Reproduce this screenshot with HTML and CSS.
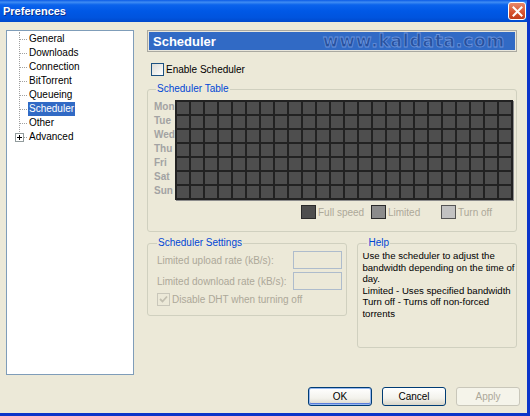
FILE: index.html
```html
<!DOCTYPE html>
<html lang="en">
  <head>
    <meta charset="UTF-8" />
    <title>Preferences</title>
    <link rel="stylesheet" href="styles.css">
  </head>
  <body>
    <div class="window">
      <div class="titlebar">
        <span class="title">Preferences</span>
        <button class="close-btn" title="Close">
          <svg width="11" height="11" viewBox="0 0 11 11">
            <path d="M1.5 1.5 L9.5 9.5 M9.5 1.5 L1.5 9.5" stroke="#fff" stroke-width="2" stroke-linecap="square" />
          </svg>
        </button>
      </div>

      <div class="client">
        <div class="main">
          <div class="tree">
            <ul class="tree-list">
              <li>General</li>
              <li>Downloads</li>
              <li>Connection</li>
              <li>BitTorrent</li>
              <li>Queueing</li>
              <li><span class="selected">Scheduler</span></li>
              <li>Other</li>
              <li class="has-children">
                <svg class="expander" width="9" height="9" viewBox="0 0 9 9">
                  <rect x="0.5" y="0.5" width="8" height="8" fill="#fff" stroke="#919b9c" />
                  <path d="M2 4.5 H7 M4.5 2 V7" stroke="#000" />
                </svg>
                Advanced
              </li>
            </ul>
          </div>

          <div class="panel">
            <div class="panel-header">
              <span class="panel-title">Scheduler</span>
              <span class="watermark">www.kaldata.com</span>
            </div>

            <label class="check-row">
              <span class="checkbox"></span>
              Enable Scheduler
            </label>

            <fieldset class="group table-group">
              <legend>Scheduler Table</legend>
              <div class="table-wrap">
                <div class="days">
                  <span>Mon</span>
                  <span>Tue</span>
                  <span>Wed</span>
                  <span>Thu</span>
                  <span>Fri</span>
                  <span>Sat</span>
                  <span>Sun</span>
                </div>
                <div class="hours-grid"></div>
              </div>
              <div class="legend-row">
                <span class="legend-item"><span class="swatch full"></span>Full speed</span>
                <span class="legend-item"><span class="swatch limited"></span>Limited</span>
                <span class="legend-item"><span class="swatch off"></span>Turn off</span>
              </div>
            </fieldset>

            <div class="lower">
              <fieldset class="group settings-group">
                <legend>Scheduler Settings</legend>
                <div class="field-row">
                  <span>Limited upload rate (kB/s):</span>
                  <input type="text" disabled />
                </div>
                <div class="field-row">
                  <span>Limited download rate (kB/s):</span>
                  <input type="text" disabled />
                </div>
                <label class="check-row disabled">
                  <span class="checkbox checked">
                    <svg width="9" height="9" viewBox="0 0 9 9">
                      <path d="M1 4 L3.5 6.5 L8 1.5" fill="none" stroke="#c2bfb0" stroke-width="1.8" />
                    </svg>
                  </span>
                  Disable DHT when turning off
                </label>
              </fieldset>

              <fieldset class="group help-group">
                <legend>Help</legend>
                <p>
                  Use the scheduler to adjust the bandwidth depending on the time of day.<br />
                  Limited - Uses specified bandwidth<br />
                  Turn off - Turns off non-forced torrents
                </p>
              </fieldset>
            </div>
          </div>
        </div>

        <div class="buttons">
          <button class="btn default">OK</button>
          <button class="btn">Cancel</button>
          <button class="btn" disabled>Apply</button>
        </div>
      </div>
    </div>
  </body>
</html>
```

FILE: styles.css
```css
body {
  margin: 0;
  font-family: "Liberation Sans", Arial, sans-serif;
  font-size: 10px;
  background: #ece9d8;
}
.window {
  width: 527px;
  height: 413px;
  display: flex;
  flex-direction: column;
  border-right: 3px solid #0b35c9;
  border-bottom: 3px solid #0b35c9;
  background: #ece9d8;
}

/* title bar */
.titlebar {
  height: 22px;
  flex: none;
  display: flex;
  align-items: center;
  justify-content: space-between;
  padding: 0 1px 0 3px;
  background: linear-gradient(
    to bottom,
    #0a5ae6 0%,
    #3f8cf3 10%,
    #0b63ec 22%,
    #0058e6 50%,
    #0054de 80%,
    #0049cc 100%
  );
}
.title {
  color: #fff;
  font-size: 11px;
  font-weight: bold;
  text-shadow: 1px 1px #0c2f8a;
}
.close-btn {
  width: 18px;
  height: 18px;
  padding: 0;
  display: flex;
  align-items: center;
  justify-content: center;
  border: 1px solid #fff;
  border-radius: 3px;
  background: linear-gradient(to bottom, #e9896b, #d6532f 60%, #c13d1b);
}

/* client area */
.client {
  flex: 1;
  display: flex;
  flex-direction: column;
  padding: 8px 7px 0 6px;
}
.main {
  display: flex;
  gap: 13px;
}

/* category tree */
.tree {
  width: 126px;
  height: 343px;
  background: #fff;
  border: 1px solid #7f9db9;
}
.tree-list {
  position: relative;
  list-style: none;
  margin: 1px 0 0;
  padding: 0;
}
.tree-list::before {
  content: "";
  position: absolute;
  left: 12px;
  top: 0;
  height: 102px;
  border-left: 1px dotted #a0a0a0;
}
.tree-list li {
  position: relative;
  height: 14px;
  line-height: 14px;
  padding-left: 22px;
  color: #000;
}
.tree-list li::before {
  content: "";
  position: absolute;
  left: 13px;
  top: 7px;
  width: 7px;
  border-top: 1px dotted #a0a0a0;
}
.tree-list .selected {
  display: inline-block;
  margin-left: -1px;
  padding: 0 1px;
  background: #316ac5;
  color: #fff;
}
.tree-list .expander {
  position: absolute;
  left: 8px;
  top: 3px;
  z-index: 1;
}

/* right panel */
.panel {
  width: 370px;
  display: flex;
  flex-direction: column;
}
.panel-header {
  height: 20px;
  display: flex;
  align-items: center;
  justify-content: space-between;
  padding: 0 11px 0 5px;
  background: #316ac5;
  border: 1px solid #aaa9a0;
  box-shadow: inset 0 0 0 1px #e8e6dc;
}
.panel-title {
  color: #fff;
  font-size: 13px;
  font-weight: bold;
}
.watermark {
  font-family: "DejaVu Sans", sans-serif;
  font-size: 17px;
  font-weight: bold;
  letter-spacing: 0.8px;
  color: #28519c;
  -webkit-text-stroke: 0.8px #6892dc;
}

.check-row {
  display: flex;
  align-items: center;
  gap: 2px;
  height: 13px;
  margin: 11px 0 0 4px;
  color: #000;
}
.checkbox {
  width: 11px;
  height: 11px;
  display: flex;
  align-items: center;
  justify-content: center;
  border: 1px solid #1c5180;
  background: linear-gradient(135deg, #dcdcd6, #fff);
}

/* group boxes */
.group {
  margin: 0;
  border: 1px solid #d0d0bf;
  border-radius: 3px;
  min-width: 0;
}
.group legend {
  padding: 0 1px;
  line-height: 12px;
  color: #0046d5;
}
.table-group {
  margin-top: 7px;
  padding: 5px 2px 12px 8px;
}
.table-wrap {
  display: flex;
  margin-left: -2px;
}
.days {
  width: 21px;
  display: flex;
  flex-direction: column;
}
.days span {
  height: 14px;
  line-height: 14px;
  font-weight: bold;
  color: #a3a3a3;
}
.hours-grid {
  width: 338px;
  height: 100px;
  background-color: #4e4e4e;
  background-image: repeating-linear-gradient(to right, #222 0 2px, transparent 2px 14px),
    repeating-linear-gradient(to bottom, #222 0 2px, transparent 2px 14px);
  box-shadow: 1px 1px 0 #8c8c8c;
}
.legend-row {
  display: flex;
  margin: 5px 0 0 145px;
}
.legend-item {
  width: 70px;
  display: flex;
  align-items: center;
  gap: 2px;
  color: #aca899;
}
.swatch {
  width: 13px;
  height: 12px;
  border: 1px solid #2a2a2a;
}
.swatch.full {
  background: #4e4e4e;
}
.swatch.limited {
  background: #8b8b8b;
}
.swatch.off {
  background: #c2c2c2;
  border-color: #555;
}

.lower {
  display: flex;
  align-items: flex-start;
  gap: 10px;
  margin-top: 5px;
}
.settings-group {
  width: 201px;
  box-sizing: border-box;
  padding: 2px 4px 9px 9px;
}
.field-row {
  display: flex;
  align-items: center;
  justify-content: space-between;
  height: 18px;
  margin-bottom: 3px;
  color: #aca899;
}
.field-row input {
  width: 49px;
  height: 18px;
  box-sizing: border-box;
  margin: 0;
  border: 1px solid #aebccc;
  background: #ece9d8;
}
.check-row.disabled {
  margin: 2px 0 0 0;
  color: #aca899;
}
.checkbox.checked {
  border-color: #c9c7ba;
  background: #ece9d8;
}
.help-group {
  width: 160px;
  height: 111px;
  box-sizing: border-box;
  padding: 1px 1px 0 4px;
}
.help-group legend {
  margin-left: 5px;
}
.help-group p {
  margin: 0;
  font-size: 9.6px;
  line-height: 11.6px;
  color: #000;
}

/* dialog buttons */
.buttons {
  display: flex;
  justify-content: flex-end;
  gap: 10px;
  margin-top: 12px;
}
.btn {
  width: 64px;
  height: 19px;
  padding: 0;
  font-family: "Liberation Sans", Arial, sans-serif;
  font-size: 10px;
  color: #000;
  border: 1px solid #003c74;
  border-radius: 3px;
  background: linear-gradient(to bottom, #ffffff, #f3f2ec 60%, #d9d6c9);
}
.btn.default {
  box-shadow: inset 0 0 0 1px #97b8ef, inset 0 -1px 0 1px #5a7edc;
}
.btn:disabled {
  color: #aca899;
  border-color: #c9c7ba;
  background: #f5f4ea;
}
```
